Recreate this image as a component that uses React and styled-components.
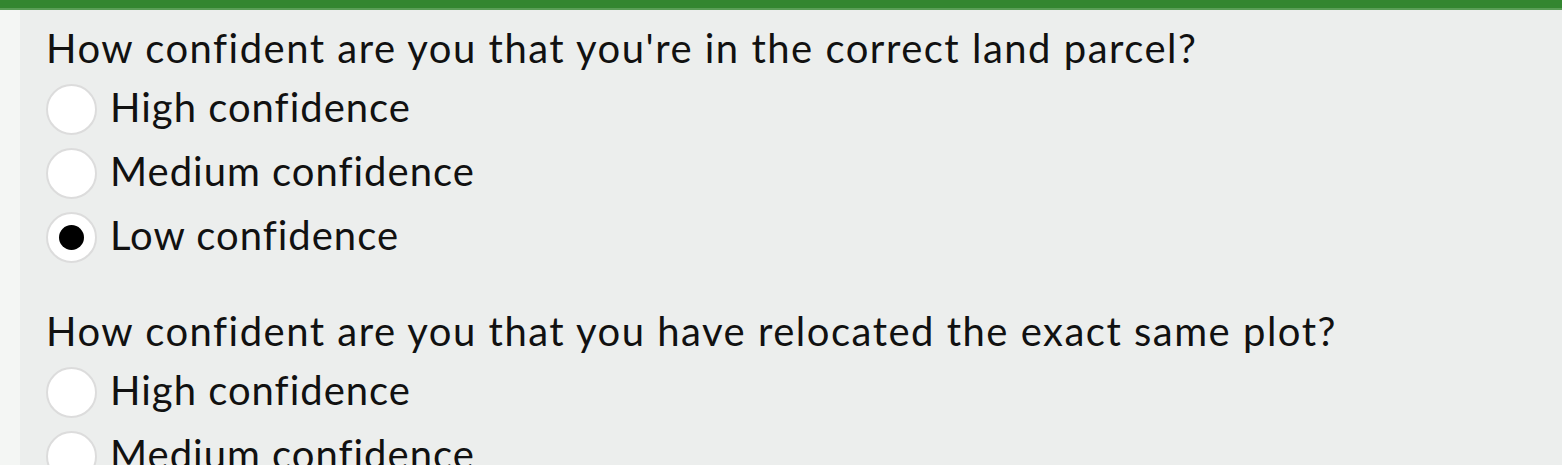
import styled, { createGlobalStyle } from "styled-components";

const GlobalStyle = createGlobalStyle`
  html, body {
    margin: 0;
    padding: 0;
    background: #eceeed;
    overflow: hidden;
  }
`;

const questions = [
  {
    name: "parcel",
    text: "How confident are you that you're in the correct land parcel?",
    value: "low",
  },
  {
    name: "plot",
    text: "How confident are you that you have relocated the exact same plot?",
    value: null,
  },
];

const options = [
  { value: "high", label: "High confidence" },
  { value: "medium", label: "Medium confidence" },
  { value: "low", label: "Low confidence" },
];

export default function App() {
  return (
    <>
      <GlobalStyle />
      <Page>
        <TopBar />
        <Body>
          <SideStrip />
          <Content>
            {questions.map((q) => (
              <Question key={q.name}>
                <Prompt>{q.text}</Prompt>
                {options.map((opt) => (
                  <Option key={opt.value}>
                    <Radio $checked={q.value === opt.value} />
                    <Label>{opt.label}</Label>
                  </Option>
                ))}
              </Question>
            ))}
          </Content>
        </Body>
      </Page>
    </>
  );
}

const Page = styled.div`
  width: 1562px;
  height: 465px;
  overflow: hidden;
  display: flex;
  flex-direction: column;
  font-family: Lato, "Open Sans", sans-serif;
  color: #111;
`;

const TopBar = styled.div`
  height: 8px;
  flex: none;
  background: #338630;
  border-bottom: 2px solid #5a9e57;
`;

const Body = styled.div`
  flex: 1;
  display: flex;
  min-height: 0;
`;

const SideStrip = styled.div`
  width: 20px;
  flex: none;
  background: #f4f6f4;
`;

const Content = styled.div`
  flex: 1;
  padding: 14px 0 0 26px;
  display: flex;
  flex-direction: column;
  gap: 38px;
`;

const Question = styled.div`
  display: flex;
  flex-direction: column;
`;

const Prompt = styled.div`
  font-size: 40px;
  line-height: 48px;
  letter-spacing: 1.5px;
  white-space: nowrap;
  margin-bottom: 5px;
`;

const Option = styled.label`
  display: flex;
  align-items: center;
  gap: 13px;
  height: 64px;
`;

const Radio = styled.span`
  box-sizing: border-box;
  flex: none;
  width: 51px;
  height: 51px;
  border-radius: 50%;
  background: #fff;
  border: 2px solid #dcdcdc;
  display: flex;
  align-items: center;
  justify-content: center;

  &::after {
    content: "";
    display: ${({ $checked }) => ($checked ? "block" : "none")};
    width: 25px;
    height: 25px;
    border-radius: 50%;
    background: #000;
  }
`;

const Label = styled.span`
  font-size: 40px;
  line-height: 48px;
  letter-spacing: 1px;
  white-space: nowrap;
  margin-top: -5px;
`;
